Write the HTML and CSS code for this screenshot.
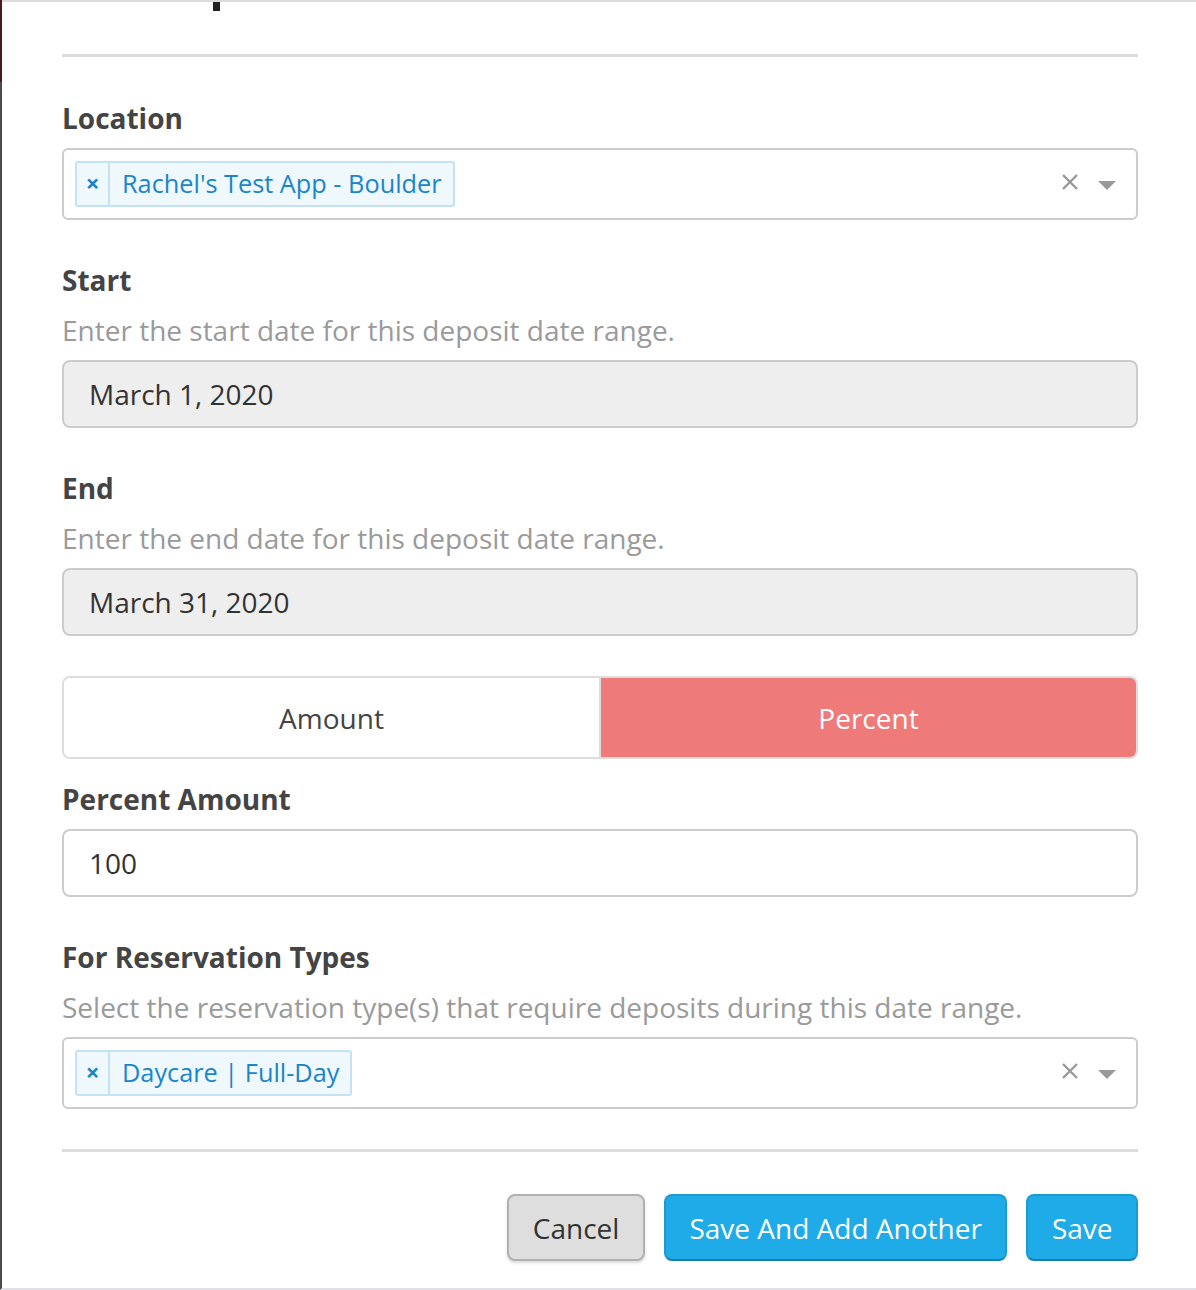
FILE: index.html
```html
<!DOCTYPE html>
<html>
<head>
<meta charset="utf-8">
<link rel="stylesheet" href="styles.css">
</head>
<body>
<div class="page">
  <div class="modal">
    <div class="modal-head"><span class="title-tail"></span></div>
    <hr class="divider">
    <form class="form">
      <div class="group">
        <label class="label">Location</label>
        <div class="select">
          <div class="tags">
            <span class="tag"><span class="tag-x">×</span><span class="tag-text">Rachel's Test App - Boulder</span></span>
          </div>
          <span class="clear"><svg width="18" height="18" viewBox="0 0 18 18"><path d="M2 2L16 16M16 2L2 16" stroke="#999" stroke-width="2.4" fill="none"/></svg></span>
          <span class="caret"></span>
        </div>
      </div>
      <div class="group">
        <label class="label">Start</label>
        <div class="help">Enter the start date for this deposit date range.</div>
        <div class="input disabled">March 1, 2020</div>
      </div>
      <div class="group">
        <label class="label">End</label>
        <div class="help">Enter the end date for this deposit date range.</div>
        <div class="input disabled">March 31, 2020</div>
      </div>
      <div class="toggle">
        <span class="toggle-btn">Amount</span>
        <span class="toggle-btn active">Percent</span>
      </div>
      <div class="group">
        <label class="label">Percent Amount</label>
        <div class="input">100</div>
      </div>
      <div class="group">
        <label class="label">For Reservation Types</label>
        <div class="help">Select the reservation type(s) that require deposits during this date range.</div>
        <div class="select">
          <div class="tags">
            <span class="tag"><span class="tag-x">×</span><span class="tag-text">Daycare | Full-Day</span></span>
          </div>
          <span class="clear"><svg width="18" height="18" viewBox="0 0 18 18"><path d="M2 2L16 16M16 2L2 16" stroke="#999" stroke-width="2.4" fill="none"/></svg></span>
          <span class="caret"></span>
        </div>
      </div>
    </form>
    <hr class="divider bottom">
    <div class="actions">
      <button class="btn btn-default" type="button">Cancel</button>
      <button class="btn btn-primary" type="button">Save And Add Another</button>
      <button class="btn btn-primary" type="button">Save</button>
    </div>
  </div>
</div>
</body>
</html>
```

FILE: styles.css
```css
html, body {
  margin: 0;
  padding: 0;
  background: #fff;
}
body {
  width: 1196px;
  height: 1290px;
  overflow: hidden;
  font-family: "Open Sans", "DejaVu Sans", sans-serif;
  color: #333;
}
.page {
  position: relative;
  height: 1290px;
  box-sizing: border-box;
  border-top: 2px solid #dcdcdc;
  border-bottom: 2px solid #e0e0e6;
  border-left: 2px solid #4b4b4b;
}
.page::before {
  content: "";
  position: absolute;
  left: -2px;
  top: -2px;
  width: 2px;
  height: 82px;
  background: #4a1a1c;
}
.modal {
  padding: 0 58px 0 60px;
}
.modal-head {
  height: 52px;
  position: relative;
}
.title-tail {
  position: absolute;
  left: 151px;
  top: 0;
  width: 7px;
  height: 9px;
  background: #222;
}
.divider {
  margin: 0;
  border: 0;
  height: 3px;
  background: #dddddd;
}
.form {
  padding-top: 41px;
}
.group {
  margin-bottom: 40px;
}
.label {
  display: block;
  font-weight: 700;
  font-size: 28px;
  line-height: 40px;
  color: #444;
  margin-bottom: 10px;
}
.help {
  font-size: 28px;
  line-height: 40px;
  color: #9a9a9a;
  margin-bottom: 10px;
}
.select {
  box-sizing: border-box;
  height: 72px;
  border: 2px solid #cccccc;
  border-radius: 6px;
  display: flex;
  align-items: center;
  padding: 0 20px 0 11px;
}
.tags {
  flex: 1;
  display: flex;
}
.tag {
  display: inline-flex;
  align-items: stretch;
  height: 46px;
  box-sizing: border-box;
  border: 2px solid #c3e2f3;
  border-radius: 3px;
  background: #eff8fd;
  color: #1a86c9;
  font-size: 25.3px;
}
.tag-x {
  width: 33px;
  border-right: 2px solid #c3e2f3;
  display: flex;
  align-items: center;
  justify-content: center;
  font-weight: 700;
  font-size: 24px;
  line-height: 1;
  padding-bottom: 3px;
  box-sizing: border-box;
}
.tag-text {
  display: flex;
  align-items: center;
  padding: 0 11px 2px 12px;
}
.clear {
  display: flex;
  align-items: center;
  margin-right: 19px;
  margin-top: -4px;
}
.caret {
  width: 0;
  height: 0;
  border-left: 9px solid transparent;
  border-right: 9px solid transparent;
  border-top: 9px solid #999;
  margin-top: 2px;
}
.input {
  box-sizing: border-box;
  height: 68px;
  border: 2px solid #cccccc;
  border-radius: 8px;
  padding: 0 25px;
  display: flex;
  align-items: center;
  font-size: 28px;
  color: #333;
}
.input.disabled {
  background: #eeeeee;
}
.toggle {
  display: flex;
  height: 83px;
  box-sizing: border-box;
  border: 2px solid #dddddd;
  border-radius: 8px;
  overflow: hidden;
  margin-bottom: 20px;
}
.toggle-btn {
  flex: 1;
  display: flex;
  align-items: center;
  justify-content: center;
  font-size: 28px;
  color: #444;
  background: #fff;
}
.toggle-btn.active {
  background: #ef7a7a;
  color: #fff;
  border-left: 2px solid #dddddd;
}
.divider.bottom {
  margin-top: 0;
}
.actions {
  display: flex;
  justify-content: flex-end;
  gap: 19px;
  margin-top: 42px;
}
.btn {
  box-sizing: border-box;
  height: 67px;
  border-radius: 8px;
  font-family: "Open Sans", "DejaVu Sans", sans-serif;
  font-size: 28px;
  padding: 0 23.5px;
  border: 2px solid transparent;
}
.btn-default {
  background: #dedede;
  border-color: #b0b0b0;
  color: #333;
  box-shadow: 0 2px 3px rgba(0,0,0,0.15);
}
.btn-primary {
  background: #1eabe8;
  border-color: #1e9ad3;
  border-bottom-color: #167fb2;
  color: #fff;
}
```
